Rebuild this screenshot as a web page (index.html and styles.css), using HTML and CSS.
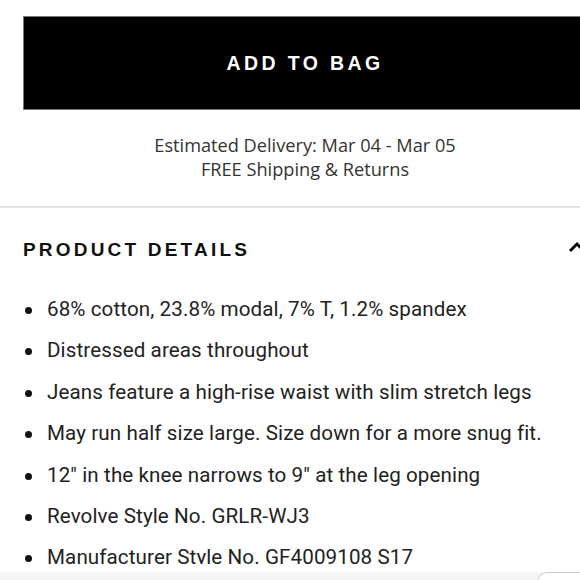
FILE: index.html
```
<!DOCTYPE html>
<html>
<head>
<meta charset="utf-8">
<link rel="stylesheet" href="styles.css">
</head>
<body>
<div class="page">
  <div class="top">
    <button class="bag">ADD TO BAG</button>
    <div class="delivery">
      <div>Estimated Delivery: Mar 04 - Mar 05</div>
      <div>FREE Shipping &amp; Returns</div>
    </div>
  </div>
  <div class="divider"></div>
  <div class="details">
    <div class="head">
      <h2 class="title">PRODUCT DETAILS</h2>
      <svg class="chev" width="18" height="12" viewBox="0 0 18 12"><path d="M2 10 L9 3 L16 10" fill="none" stroke="#000" stroke-width="2.8"/></svg>
    </div>
    <ul class="list">
      <li>68% cotton, 23.8% modal, 7% T, 1.2% spandex</li>
      <li>Distressed areas throughout</li>
      <li>Jeans feature a high-rise waist with slim stretch legs</li>
      <li>May run half size large. Size down for a more snug fit.</li>
      <li>12" in the knee narrows to 9" at the leg opening</li>
      <li>Revolve Style No. GRLR-WJ3</li>
      <li>Manufacturer Style No. GF4009108 S17</li>
    </ul>
  </div>
  <div class="bottom"><span class="pill"></span></div>
</div>
</body>
</html>
```
FILE: styles.css
```
html, body {
  margin: 0;
  padding: 0;
  background: #fff;
}
.page {
  width: 580px;
  height: 580px;
  overflow: hidden;
  position: relative;
  font-family: "Open Sans", "Noto Sans", sans-serif;
  color: #222;
}
.top {
  padding: 16px 0 0 23px;
  width: 564px;
}
.bag {
  display: block;
  width: 564px;
  height: 94px;
  background: #000;
  border: 1px solid #777;
  color: #fff;
  font-family: "Liberation Sans", Arial, sans-serif;
  font-weight: bold;
  font-size: 19.5px;
  letter-spacing: 3.4px;
  padding: 0;
  margin: 0;
}
.delivery {
  text-align: center;
  font-size: 18.2px;
  line-height: 24px;
  color: #333;
  margin-top: 23px;
}
.divider {
  margin-top: 25px;
  height: 2px;
  background: #e2e2e2;
}
.details {
  padding: 0 0 0 23px;
}
.head {
  display: flex;
  justify-content: space-between;
  align-items: center;
  margin-top: 30px;
  height: 24px;
}
.title {
  margin: 0;
  font-family: "Liberation Sans", Arial, sans-serif;
  font-weight: bold;
  font-size: 19px;
  letter-spacing: 3.2px;
  color: #111;
}
.chev {
  margin-right: -6px;
  margin-top: -6px;
}
.list {
  list-style: none;
  margin: 27px 0 0 0;
  padding: 0;
}
.list li {
  position: relative;
  padding-left: 24px;
  font-family: Roboto, sans-serif;
  font-size: 20.6px;
  letter-spacing: 0.1px;
  line-height: 41.4px;
  color: #222;
  white-space: nowrap;
}
.list li::before {
  content: "";
  position: absolute;
  left: 2px;
  top: 18px;
  width: 7px;
  height: 7px;
  border-radius: 50%;
  background: #111;
}
.bottom {
  position: absolute;
  left: 0;
  right: 0;
  bottom: 0;
  height: 8px;
  background: #f5f5f5;
  border-top: 8px solid #fff;
}
.pill {
  position: absolute;
  left: 537px;
  top: 0;
  width: 60px;
  height: 20px;
  border: 1px solid #ccc;
  border-radius: 10px;
  background: #fff;
}
```
